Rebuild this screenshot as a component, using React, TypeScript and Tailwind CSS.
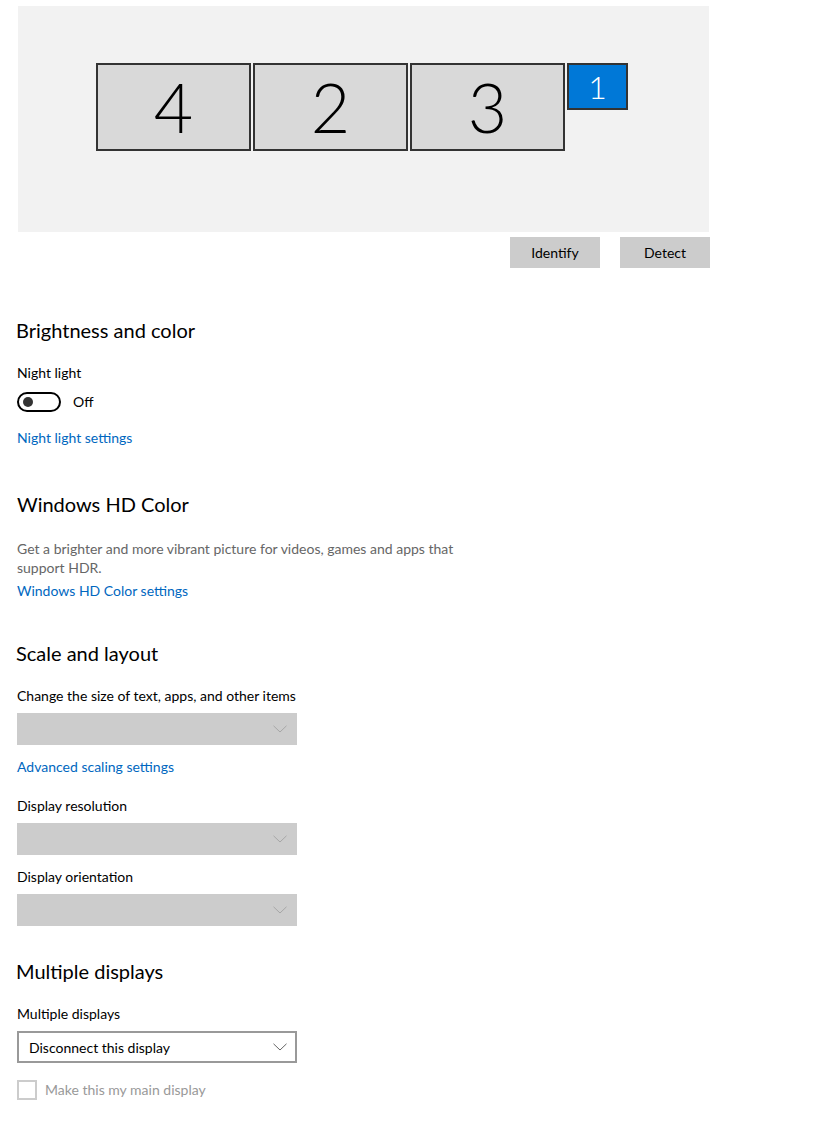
import React from "react";

const font = { fontFamily: 'Lato, "Noto Sans", sans-serif' };

function Chevron({ color }: { color: string }) {
  return (
    <svg width="14" height="8" viewBox="0 0 14 8" fill="none">
      <path d="M0.5 0.8 L7 7 L13.5 0.8" stroke={color} strokeWidth="1" />
    </svg>
  );
}

function GrayDrop() {
  return (
    <div className="w-[280px] h-[32px] bg-[#cccccc] flex items-center justify-end pr-[10px]">
      <Chevron color="#a6a6a6" />
    </div>
  );
}

function Monitor({ n, w, h, blue }: { n: string; w: number; h: number; blue?: boolean }) {
  return (
    <div
      className={
        "border-2 border-[#333333] flex items-center justify-center " +
        (blue ? "bg-[#0078d7] text-white" : "bg-[#d9d9d9] text-black")
      }
      style={{ width: w, height: h }}
    >
      <span
        className="font-light leading-none"
        style={{ fontFamily: 'Lato, "Open Sans", sans-serif', fontSize: blue ? 32 : 68 }}
      >
        {n}
      </span>
    </div>
  );
}

export default function App() {
  return (
    <div className="w-[834px] h-[1133px] bg-white text-black" style={font}>
      <div className="pt-[6px] pl-[18px]">
        <div className="w-[691px] h-[226px] bg-[#f2f2f2] pt-[57px] pl-[78px] flex items-start gap-[2px]">
          <Monitor n="4" w={155} h={88} />
          <Monitor n="2" w={155} h={88} />
          <Monitor n="3" w={155} h={88} />
          <Monitor n="1" w={61} h={47} blue />
        </div>
        <div className="w-[692px] flex justify-end gap-[20px] mt-[5px]">
          <div className="w-[90px] h-[31px] bg-[#cccccc] flex items-center justify-center text-[14px] text-black">Identify</div>
          <div className="w-[90px] h-[31px] bg-[#cccccc] flex items-center justify-center text-[14px] text-black">Detect</div>
        </div>
      </div>

      <div className="pl-[17px] flex flex-col items-start">
        <div className="mt-[48px] text-[20px] leading-[28px] -ml-[1px]">Brightness and color</div>
        <div className="mt-[19px] text-[14px] leading-[20px]">Night light</div>
        <div className="mt-[9px] flex items-center gap-[12px]">
          <div className="w-[44px] h-[20px] rounded-full border-2 border-black flex items-center pl-[4px]">
            <div className="w-[10px] h-[10px] rounded-full bg-[#333333]" />
          </div>
          <span className="text-[14px] leading-[20px]">Off</span>
        </div>
        <div className="mt-[16px] text-[14px] leading-[20px] text-[#0067c0]">Night light settings</div>

        <div className="mt-[42px] text-[20px] leading-[28px]">Windows HD Color</div>
        <div className="mt-[21px] w-[460px] text-[14px] leading-[19px] text-[#666666]">
          Get a brighter and more vibrant picture for videos, games and apps that support HDR.
        </div>
        <div className="mt-[4px] text-[14px] leading-[20px] text-[#0067c0]">Windows HD Color settings</div>

        <div className="mt-[38px] text-[20px] leading-[28px] -ml-[1px]">Scale and layout</div>
        <div className="mt-[19px] text-[14px] leading-[20px]">Change the size of text, apps, and other items</div>
        <div className="mt-[7px]"><GrayDrop /></div>
        <div className="mt-[12px] text-[14px] leading-[20px] text-[#0067c0]">Advanced scaling settings</div>
        <div className="mt-[19px] text-[14px] leading-[20px]">Display resolution</div>
        <div className="mt-[7px]"><GrayDrop /></div>
        <div className="mt-[12px] text-[14px] leading-[20px]">Display orientation</div>
        <div className="mt-[7px]"><GrayDrop /></div>

        <div className="mt-[31px] text-[20px] leading-[28px] -ml-[1px]">Multiple displays</div>
        <div className="mt-[19px] text-[14px] leading-[20px]">Multiple displays</div>
        <div className="mt-[7px] w-[280px] h-[32px] border-2 border-[#999999] flex items-center justify-between pl-[10px] pr-[8px]">
          <span className="text-[14px]">Disconnect this display</span>
          <Chevron color="#666666" />
        </div>
        <div className="mt-[17px] flex items-center gap-[8px]">
          <div className="w-[20px] h-[20px] border-2 border-[#cccccc]" />
          <span className="text-[14px] leading-[20px] text-[#999999]">Make this my main display</span>
        </div>
      </div>
    </div>
  );
}
